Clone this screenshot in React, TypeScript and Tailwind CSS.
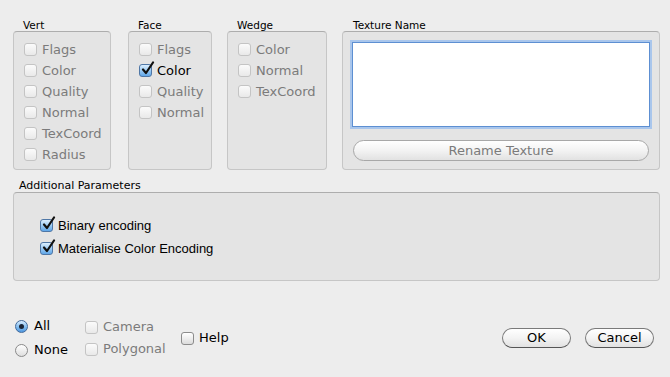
import React from "react";

type BoxProps = { checked?: boolean; disabled?: boolean };

// aqua style checkbox
const CheckBox: React.FC<BoxProps> = ({ checked, disabled }) => {
    if (checked) {
        return (
            <span className="relative inline-block w-[13px] h-[13px] shrink-0 rounded-[3px] border border-[#4f77a6] bg-gradient-to-b from-[#dcefff] via-[#9ccbf3] to-[#5fa6e8]">
                <svg className="absolute -top-[4px] left-[1px]" width="14" height="15" viewBox="0 0 14 15">
                    <path d="M2 8.5 L5 12 L12 1.5" fill="none" stroke="#111" strokeWidth="2.2" strokeLinecap="round" strokeLinejoin="round" />
                </svg>
            </span>
        );
    }
    return (
        <span
            className={
                disabled
                    ? "inline-block w-[13px] h-[13px] shrink-0 rounded-[3px] border border-[#c4c4c4] bg-gradient-to-b from-[#fbfbfb] to-[#e9e9e9]"
                    : "inline-block w-[13px] h-[13px] shrink-0 rounded-[3px] border border-[#8c8c8c] bg-gradient-to-b from-[#ffffff] to-[#dcdcdc]"
            }
        />
    );
};

const Row: React.FC<{ label: string; checked?: boolean; disabled?: boolean; h?: string }> = ({ label, checked, disabled, h }) => (
    <div className={`flex items-center gap-[5px] ${h ?? "h-[21px]"}`}>
        <CheckBox checked={checked} disabled={disabled} />
        <span className={disabled ? "text-[#7b7b7b]" : "text-black"}>{label}</span>
    </div>
);

const Radio: React.FC<{ label: string; on?: boolean }> = ({ label, on }) => (
    <div className="flex items-center gap-[6px] h-[24px]">
        {on ? (
            <span className="flex items-center justify-center w-[13px] h-[13px] rounded-full border border-[#41699a] bg-gradient-to-b from-[#d8edff] via-[#88c0f0] to-[#4f97e0]">
                <span className="w-[5px] h-[5px] rounded-full bg-[#1b2536]" />
            </span>
        ) : (
            <span className="w-[13px] h-[13px] rounded-full border border-[#8a8a8a] bg-gradient-to-b from-white to-[#dedede]" />
        )}
        <span className="text-black">{label}</span>
    </div>
);

const Group: React.FC<{ title: string; w: string; children: React.ReactNode }> = ({ title, w, children }) => (
    <div className={`flex flex-col ${w}`}>
        <div className="h-[11px] leading-[11px] text-[10.5px] pl-[10px] text-black">{title}</div>
        <div className="h-[139px] rounded-[4px] border border-[#c6c6c6] border-t-[#adadad] bg-[#e4e4e4] pl-[10px] pt-[7px]">
            {children}
        </div>
    </div>
);

const Pill: React.FC<{ label: string; className?: string; disabled?: boolean }> = ({ label, className, disabled }) => (
    <div
        className={`flex items-center justify-center rounded-full border bg-gradient-to-b from-white via-[#f3f3f3] to-[#e2e2e2] ${
            disabled ? "border-[#a8a8a8] text-[#7b7b7b]" : "border-[#7a7a7a] border-b-[#555] text-black"
        } ${className ?? ""}`}
    >
        {label}
    </div>
);

export default function App() {
    return (
        <div
            className="w-[670px] h-[377px] bg-[#ededed] overflow-hidden text-[13px]"
            style={{ fontFamily: '"DejaVu Sans", "Liberation Sans", sans-serif' }}
        >
            {/* top row of groups */}
            <div className="flex pt-[20px] pl-[13px]">
                <Group title="Vert" w="w-[98px]">
                    <Row label="Flags" disabled />
                    <Row label="Color" disabled />
                    <Row label="Quality" disabled />
                    <Row label="Normal" disabled />
                    <Row label="TexCoord" disabled />
                    <Row label="Radius" disabled />
                </Group>
                <div className="w-[17px]" />
                <Group title="Face" w="w-[84px]">
                    <Row label="Flags" disabled />
                    <Row label="Color" checked />
                    <Row label="Quality" disabled />
                    <Row label="Normal" disabled />
                </Group>
                <div className="w-[15px]" />
                <Group title="Wedge" w="w-[100px]">
                    <Row label="Color" disabled />
                    <Row label="Normal" disabled />
                    <Row label="TexCoord" disabled />
                </Group>
                <div className="w-[15px]" />
                <div className="flex flex-col w-[318px]">
                    <div className="h-[11px] leading-[11px] text-[10.5px] pl-[11px] text-black">Texture Name</div>
                    <div className="h-[139px] rounded-[4px] border border-[#c6c6c6] border-t-[#adadad] bg-[#e4e4e4] px-[9px] pt-[10px]">
                        <div className="h-[85px] bg-white border border-[#5d8fd2] shadow-[0_0_0_2px_#a9c6ec]" />
                        <Pill label="Rename Texture" disabled className="mt-[13px] mx-[1px] h-[21px]" />
                    </div>
                </div>
            </div>

            {/* additional parameters */}
            <div className="mt-[10px] pl-[13px]">
                <div className="h-[11px] leading-[11px] text-[11px] pl-[6px] text-black">Additional Parameters</div>
                <div
                    className="mt-[1px] w-[647px] h-[89px] rounded-[4px] border border-[#c6c6c6] border-t-[#adadad] bg-[#e4e4e4] pl-[26px] pt-[21px]"
                    style={{ fontFamily: '"Liberation Sans", sans-serif' }}
                >
                    <Row label="Binary encoding" checked h="h-[23px]" />
                    <Row label="Materialise Color Encoding" checked h="h-[23px]" />
                </div>
            </div>

            {/* bottom controls */}
            <div className="flex items-center mt-[33px] pl-[15px] pr-[16px]">
                <div className="flex flex-col w-[70px]">
                    <Radio label="All" on />
                    <Radio label="None" />
                </div>
                <div className="flex flex-col w-[96px]">
                    <Row label="Camera" disabled h="h-[22px]" />
                    <Row label="Polygonal" disabled h="h-[22px]" />
                </div>
                <Row label="Help" />
                <div className="ml-auto flex gap-[14px]">
                    <Pill label="OK" className="w-[69px] h-[20px]" />
                    <Pill label="Cancel" className="w-[69px] h-[20px]" />
                </div>
            </div>
        </div>
    );
}
